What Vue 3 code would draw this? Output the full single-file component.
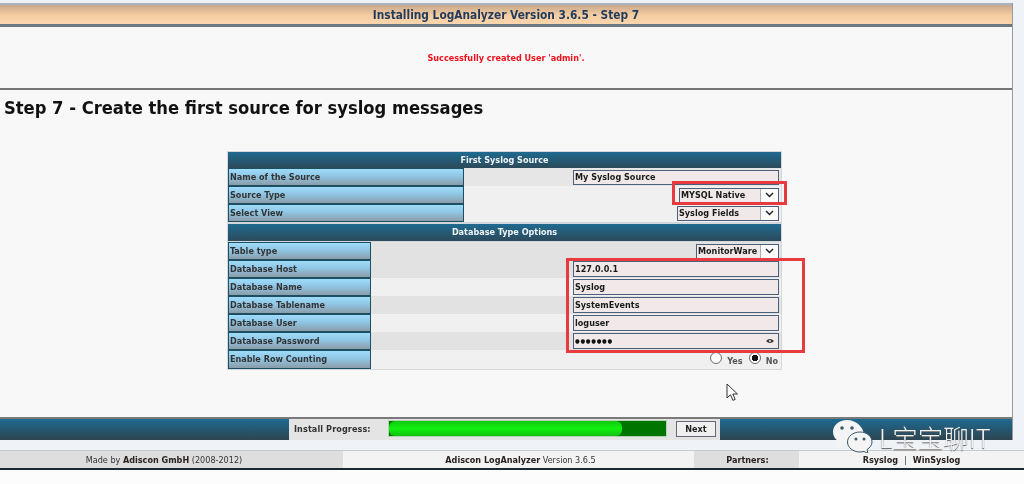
<template>
  <div class="page">
    <div class="shell">
      <div class="content">
        <div class="titlebar">Installing LogAnalyzer Version 3.6.5 - Step 7</div>
        <div class="message">Successfully created User 'admin'.</div>
        <h1>Step 7 - Create the first source for syslog messages</h1>

        <div class="form">
          <div class="section">First Syslog Source</div>
          <div v-for="(row, i) in sourceRows" :key="row.label" class="row wide" :class="{ alt: i > 0 }">
            <div class="label">{{ row.label }}</div>
            <div class="cell">
              <div v-if="row.type === 'input'" class="input">{{ row.value }}</div>
              <div v-else class="select" :style="{ width: row.width + 'px' }">
                <span>{{ row.value }}</span><i class="arrow"><svg width="9" height="6" viewBox="0 0 9 6"><path d="M1 1l3.5 3.5L8 1" fill="none" stroke="#222" stroke-width="1.5"/></svg></i>
              </div>
            </div>
          </div>

          <div class="section second">Database Type Options</div>
          <div v-for="row in dbRows" :key="row.label" class="row narrow" :class="{ alt: row.alt, tall: row.type === 'radio' }">
            <div class="label">{{ row.label }}</div>
            <div class="cell">
              <div v-if="row.type === 'input'" class="input db">{{ row.value }}</div>
              <div v-else-if="row.type === 'password'" class="input db pass">
                <span class="dots">●●●●●●●</span>
                <svg width="8" height="6" viewBox="0 0 8 6"><path d="M0 3q4-4 8 0q-4 4-8 0z" fill="#333"/><circle cx="4" cy="3" r="1" fill="#eee"/></svg>
              </div>
              <div v-else-if="row.type === 'select'" class="select" :style="{ width: row.width + 'px' }">
                <span>{{ row.value }}</span><i class="arrow"><svg width="9" height="6" viewBox="0 0 9 6"><path d="M1 1l3.5 3.5L8 1" fill="none" stroke="#222" stroke-width="1.5"/></svg></i>
              </div>
              <div v-else class="radios">
                <i class="radio"></i><span>Yes</span>
                <i class="radio on"></i><span>No</span>
              </div>
            </div>
          </div>
        </div>

        <div class="progress-row">
          <div class="dark left"></div>
          <div class="progress-label">Install Progress:</div>
          <div class="bar"><div class="fill" :style="{ width: progress + '%' }"></div></div>
          <div class="next-wrap"><div class="next">Next</div></div>
          <div class="dark right"></div>
        </div>
      </div>

      <div class="footer">
        <div class="foot a"><span>Made by <b>Adiscon GmbH</b> (2008-2012)</span></div>
        <div class="foot b"><span><b>Adiscon LogAnalyzer</b> Version 3.6.5</span></div>
        <div class="foot c"><b>Partners:</b></div>
        <div class="foot d"><b>Rsyslog</b><span class="sep">|</span><b>WinSyslog</b></div>
      </div>
    </div>

    <div class="mark mark-select"></div>
    <div class="mark mark-db"></div>

    <svg class="cursor" width="13" height="19" viewBox="0 0 13 19">
      <path d="M1 1v14l3.500-3.200 2.400 5.600 2.300-1-2.400-5.400H11.500z" fill="#fff" stroke="#333" stroke-width="1"/>
    </svg>

    <div class="watermark">
      <svg width="42" height="34" viewBox="0 0 42 34">
        <path d="M15 1C7 1 1 6 1 13c0 4 2 7 5 9l-1 5 6-3c1 .3 3 .5 4 .5h2c2-6 8-9 15-9-1-8-8-14.500-17-14.500z" fill="#f4f4f4"/>
        <path d="M28 13c-7 0-12.500 4.500-12.500 10S21 33 28 33c1.500 0 2.500-.2 4-.6l4 2.200-1-4c3-2 5-4.500 5-7.600 0-5.500-5-10-12-10z" fill="#f4f4f4" stroke="#3a5a68" stroke-width="1"/>
        <circle cx="10" cy="9" r="1.800" fill="#3a5a68"/><circle cx="20" cy="9" r="1.800" fill="#3a5a68"/>
        <circle cx="24" cy="20" r="1.500" fill="#3a5a68"/><circle cx="32" cy="20" r="1.500" fill="#3a5a68"/>
      </svg>
      <span>L宝宝聊IT</span>
    </div>
  </div>
</template>

<script setup>
const progress = 84

const sourceRows = [
  { label: 'Name of the Source', type: 'input', value: 'My Syslog Source' },
  { label: 'Source Type', type: 'select', value: 'MYSQL Native', width: 100 },
  { label: 'Select View', type: 'select', value: 'Syslog Fields', width: 102 }
]

const dbRows = [
  { label: 'Table type', type: 'select', value: 'MonitorWare', width: 83 },
  { label: 'Database Host', type: 'input', value: '127.0.0.1' },
  { label: 'Database Name', type: 'input', value: 'Syslog', alt: true },
  { label: 'Database Tablename', type: 'input', value: 'SystemEvents' },
  { label: 'Database User', type: 'input', value: 'loguser', alt: true },
  { label: 'Database Password', type: 'password' },
  { label: 'Enable Row Counting', type: 'radio', alt: true }
]
</script>

<style>
html, body { background: #fdfcfd; overflow: hidden; }
</style>

<style scoped>
.page {
  position: relative;
  width: 1024px;
  height: 484px;
  overflow: hidden;
  font-family: "DejaVu Sans", Verdana, sans-serif;
  font-stretch: condensed;
  font-size: 9px;
  color: #222;
  background: #fdfcfd;
  filter: blur(0.3px);
}
.shell {
  height: 470px;
  padding-top: 3px;
  box-sizing: border-box;
  background: #eff3f7;
}
.content {
  width: 1013px;
  height: 437px;
  display: flex;
  flex-direction: column;
  box-sizing: border-box;
  background: #f8f8f8;
  border-right: 1px solid #9a9a9a;
  margin-bottom: 10px;
}
.titlebar {
  height: 24px;
  flex: none;
  box-sizing: border-box;
  border-top: 2px solid #aab4c0;
  border-bottom: 3px solid #6d7882;
  background: linear-gradient(#c8a98c, #f5cda2 55%, #fad5ad);
  text-align: center;
  font-size: 11.8px;
  font-weight: bold;
  line-height: 20px;
  color: #1f3a5a;
}
.message {
  height: 63px;
  flex: none;
  box-sizing: border-box;
  text-align: center;
  line-height: 63px;
  font-weight: bold;
  color: #f0101c;
  border-bottom: 2px solid #767676;
}
h1 {
  margin: 0;
  padding: 7px 0 0 4px;
  height: 54px;
  flex: none;
  box-sizing: border-box;
  font-size: 18.2px;
  line-height: 22px;
  font-weight: bold;
  color: #111;
}
.form {
  width: 555px;
  margin: 7px 0 0 227px;
  padding: 1px;
  background: #d4d8dc;
  box-sizing: border-box;
}
.section {
  height: 16px;
  background: linear-gradient(#1f6a90, #2c4a5a);
  color: #f0f4f6;
  font-weight: bold;
  text-align: center;
  line-height: 17px;
}
.section.second { height: 17px; margin-top: 2px; margin-bottom: 1px; }
.row {
  display: grid;
  height: 18px;
  background: #e2e2e2;
}
.row.alt { background: #f0f0f0; }
.row.tall { height: 19px; }
.row.wide { grid-template-columns: 236px 1fr; background: #e6e6e6; }
.row.wide.alt { background: #f0f0f0; }
.row.narrow { grid-template-columns: 143px 1fr; }
.label {
  border: 1px solid #1d4f63;
  background: linear-gradient(#9edcfa, #8fc6e4 45%, #8b9ca8);
  font-weight: bold;
  color: #333;
  padding-left: 1px;
  line-height: 16px;
  box-sizing: border-box;
  overflow: hidden;
  white-space: nowrap;
}
.tall .label { line-height: 17px; }
.cell {
  display: flex;
  justify-content: flex-end;
  align-items: center;
  padding-right: 2px;
}
.input {
  width: 206px;
  height: 15px;
  box-sizing: border-box;
  border: 1px solid #4a6078;
  background: #f1e9e9;
  font-weight: bold;
  line-height: 13px;
  padding-left: 1px;
  color: #1a1a1a;
}
.input.db { height: 16px; line-height: 14px; }
.pass {
  display: flex;
  justify-content: space-between;
  align-items: center;
  padding-right: 4px;
}
.dots { font-size: 6px; letter-spacing: 0.7px; color: #111; }
.select {
  height: 15px;
  box-sizing: border-box;
  border: 1px solid #4a6078;
  background: #f1e9e9;
  display: flex;
  justify-content: space-between;
  font-weight: bold;
  line-height: 13px;
  padding-left: 1px;
  color: #1a1a1a;
}
.arrow {
  width: 17px;
  background: #fbfbfb;
  border-left: 1px solid #a8b0b8;
  display: flex;
  align-items: center;
  justify-content: center;
}
.radios {
  display: flex;
  align-items: center;
  gap: 5px;
  font-weight: bold;
  color: #555;
}
.radios span { margin-top: 3px; margin-right: 1px; }
.radio {
  width: 12px;
  height: 12px;
  box-sizing: border-box;
  border: 1px solid #6a6a6a;
  border-radius: 50%;
  background: #fff;
  margin-top: -3px;
}
.radio.on { background: radial-gradient(circle, #111 0 3px, #fff 3.500px); }
.progress-row {
  display: flex;
  margin-top: auto;
  height: 23px;
  flex: none;
  background: #e4e4e4;
  border-top: 2px solid #7a7a7a;
  box-sizing: border-box;
}
.dark { background: linear-gradient(#1f6a90, #2c4450); }
.dark.left { width: 289px; }
.dark.right { flex: 1; }
.progress-label {
  width: 99px;
  padding-left: 5px;
  box-sizing: border-box;
  font-weight: bold;
  line-height: 20px;
  letter-spacing: 0.1px;
  color: #333;
}
.bar {
  width: 279px;
  height: 17px;
  margin-top: 1px;
  background: #007500;
  border: 1px solid #b5d2b5;
  box-sizing: border-box;
}
.fill {
  height: 100%;
  border-radius: 6px;
  background: linear-gradient(#10c810, #10f010 50%, #10c010);
}
.next-wrap { width: 53px; padding: 2px 4px 0 9px; box-sizing: border-box; }
.next {
  height: 16px;
  border: 1px solid #667;
  background: #f0f0f0;
  text-align: center;
  font-weight: bold;
  line-height: 15px;
  box-sizing: border-box;
  color: #222;
}
.footer {
  height: 20px;
  display: grid;
  grid-template-columns: 343px 351px 105px 1fr;
  border-top: 1px solid #c4ccd2;
  border-bottom: 2px solid #1a2a30;
  box-sizing: border-box;
  color: #333;
  text-align: center;
  line-height: 16px;
}
.foot { padding-top: 1px; }
.foot b { color: #2a2020; }
.foot.a { background: #dedede; padding-right: 15px; }
.foot.b { background: #f3f3f3; padding-left: 4px; }
.foot.c { background: #dedede; padding-left: 2px; }
.foot.d { background: #f3f3f3; }
.sep { margin: 0 6px; }
.mark {
  position: absolute;
  border: 3px solid #e83a3f;
  box-sizing: border-box;
}
.mark-select { left: 672px; top: 181px; width: 115px; height: 24px; }
.mark-db { left: 566px; top: 258px; width: 239px; height: 95px; }
.cursor { position: absolute; left: 726px; top: 383px; }
.watermark {
  position: absolute;
  left: 832px;
  top: 419px;
  display: flex;
  align-items: flex-start;
  gap: 5px;
  color: #f2f2f2;
}
.watermark span {
  margin-top: 3px;
  font-family: "Noto Sans CJK SC", "Noto Sans", sans-serif;
  font-size: 25.500px;
  font-weight: 300;
  line-height: 30px;
  text-shadow: 0 1px 1px #555;
}
</style>
